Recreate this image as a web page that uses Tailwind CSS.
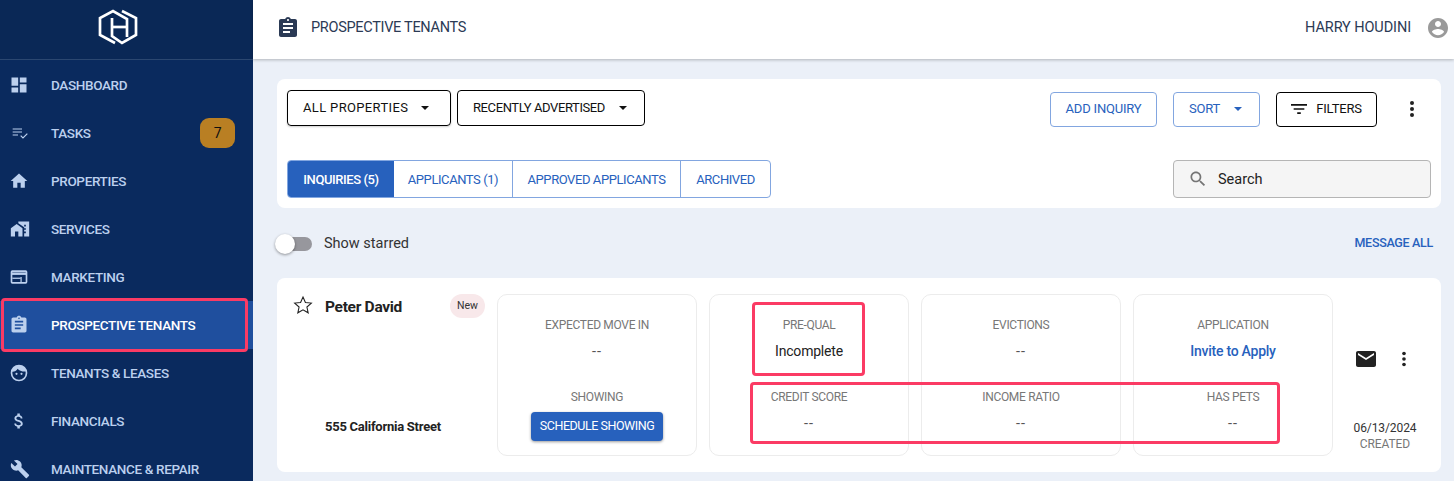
<!DOCTYPE html>
<html lang="en">

<head>
    <meta charset="UTF-8">
    <meta name="viewport" content="width=device-width, initial-scale=1.0">
    <title>Prospective Tenants</title>
    <script src="https://cdn.jsdelivr.net/npm/@tailwindcss/browser@4"></script>
</head>

<body class="font-['Roboto',sans-serif] overflow-hidden">
    <div class="relative flex h-[481px] w-[1454px] overflow-hidden bg-[#ebf0f8]">

        <!-- sidebar -->
        <aside class="w-[253px] shrink-0 bg-[#0a2a5e] text-[13.5px] font-medium tracking-[-0.35px] text-[#bcd0ee]">
            <div class="flex h-[60px] items-center justify-center border-b border-[#2b4770] bg-[#0a2856]">
                <svg class="ml-[-17px] mt-[-6px] h-[36px] w-[40px]" viewBox="98 9 40 36" fill="none" stroke="white" stroke-width="2.700">
                    <path d="M115 43 100 35V18L113 11 127 19V37" />
                    <path d="M122 11 136 18V35L122 43 112 36V18" />
                    <path d="M112 27H127" />
                </svg>
            </div>
            <nav class="pt-px">
                <a class="flex h-[48px] items-center pl-[51px] relative">
                    <svg class="absolute left-[9px] h-[20px] w-[20px]" viewBox="0 0 24 24" fill="#bcd0ee"><path d="M3 13h8V3H3v10zm0 8h8v-6H3v6zm10 0h8V11h-8v10zm0-18v6h8V3h-8z" /></svg>
                    DASHBOARD
                </a>
                <a class="flex h-[48px] items-center justify-between pl-[51px] pr-[18px] relative">
                    <svg class="absolute left-[12px] h-[16px] w-[16px]" viewBox="0 0 24 24" fill="none" stroke="#bcd0ee" stroke-width="1.800"><path d="M1 6h14M1 10.500h14M1 15h8M13 16l3.500 3.500L23 13" /></svg>
                    TASKS
                    <span class="flex h-[30px] w-[35px] items-center justify-center rounded-[9px] bg-[#b97f23] text-[14px] font-normal text-[#111]">7</span>
                </a>
                <a class="flex h-[48px] items-center pl-[51px] relative">
                    <svg class="absolute left-[9px] h-[20px] w-[20px]" viewBox="0 0 24 24" fill="#bcd0ee"><path d="M10 20v-6h4v6h5v-8h3L12 3 2 12h3v8z" /></svg>
                    PROPERTIES
                </a>
                <a class="flex h-[48px] items-center pl-[51px] relative">
                    <svg class="absolute left-[10px] h-[20px] w-[20px]" viewBox="0 0 24 24" fill="#bcd0ee"><path d="M1 11v10h5v-6h4v6h5V11L8 6z" /><path d="M10 3v1.970l7 5V11h2v2h-2v2h2v2h-2v4h6V3H10zm9 6h-2V7h2v2z" /></svg>
                    SERVICES
                </a>
                <a class="flex h-[48px] items-center pl-[51px] relative">
                    <svg class="absolute left-[9px] h-[20px] w-[20px]" viewBox="0 0 24 24" fill="none" stroke="#bcd0ee"><rect x="3" y="5" width="18" height="14" rx="1" stroke-width="2" /><path d="M3 8h18" stroke-width="3" /><path d="M14.500 12v6" stroke-width="1.500" /><path d="M4 13.500h10" stroke-width="1.500" /></svg>
                    MARKETING
                </a>
                <a class="flex h-[48px] items-center bg-[#1f4f9e] pl-[51px] text-white relative">
                    <svg class="absolute left-[9px] h-[20px] w-[20px]" viewBox="0 0 24 24" fill="#bcd0ee"><path d="M19 3h-4.180C14.400 1.840 13.300 1 12 1c-1.300 0-2.400.84-2.820 2H5c-1.100 0-2 .9-2 2v14c0 1.100.9 2 2 2h14c1.100 0 2-.9 2-2V5c0-1.100-.9-2-2-2zm-7 0c.55 0 1 .45 1 1s-.45 1-1 1-1-.45-1-1 .45-1 1-1zm2 14H7v-2h7v2zm3-4H7v-2h10v2zm0-4H7V7h10v2z" /></svg>
                    PROSPECTIVE TENANTS
                </a>
                <a class="flex h-[48px] items-center pl-[51px] relative">
                    <svg class="absolute left-[9px] h-[20px] w-[20px]" viewBox="0 0 24 24" fill="#bcd0ee"><path d="M12 2a10 10 0 1 0 0 20 10 10 0 0 0 0-20zm0 18a8 8 0 0 1-8-8c0-.6.1-1.100.2-1.600C7 10.300 9 9 10.500 6.800 12 9 15.500 10.500 19.800 10.300c.1.500.2 1.100.2 1.700a8 8 0 0 1-8 8z" /><circle cx="9" cy="13" r="1.300" /><circle cx="15" cy="13" r="1.300" /></svg>
                    TENANTS &amp; LEASES
                </a>
                <a class="flex h-[48px] items-center pl-[51px] relative">
                    <svg class="absolute left-[9px] h-[20px] w-[20px]" viewBox="0 0 24 24" fill="#bcd0ee"><path d="M11.800 10.900c-2.270-.59-3-1.200-3-2.150 0-1.090 1.010-1.850 2.700-1.850 1.780 0 2.440.85 2.500 2.100h2.210c-.07-1.720-1.120-3.300-3.210-3.810V3h-3v2.160c-1.940.42-3.500 1.680-3.500 3.610 0 2.310 1.910 3.460 4.700 4.130 2.500.6 3 1.480 3 2.410 0 .69-.49 1.790-2.700 1.790-2.060 0-2.870-.92-2.980-2.100h-2.200c.12 2.190 1.760 3.420 3.680 3.830V21h3v-2.150c1.950-.37 3.500-1.500 3.500-3.550 0-2.840-2.430-3.810-4.700-4.400z" /></svg>
                    FINANCIALS
                </a>
                <a class="flex h-[48px] items-center pl-[51px] relative">
                    <svg class="absolute left-[10px] h-[20px] w-[20px]" viewBox="0 0 24 24" fill="#bcd0ee"><path d="M22.700 19l-9.100-9.100c.9-2.300.4-5-1.500-6.900-2-2-5-2.400-7.400-1.300L9 6 6 9 1.600 4.700C.4 7.100.9 10.100 2.900 12.100c1.900 1.900 4.600 2.400 6.900 1.500l9.100 9.100c.4.4 1 .4 1.400 0l2.300-2.300c.5-.4.5-1.100.1-1.400z" /></svg>
                    MAINTENANCE &amp; REPAIR
                </a>
            </nav>
        </aside>

        <div class="min-w-0 flex-1">
            <!-- top bar -->
            <header class="flex h-[59px] items-center justify-between bg-white pb-[3px] pl-[23px] pr-[4px] text-[#2b3a55] shadow-[0_1px_3px_rgba(0,0,0,0.25)]">
                <div class="flex items-center gap-[11px] text-[14.500px] tracking-[-0.3px]">
                    <svg class="h-[24px] w-[24px]" viewBox="0 0 24 24" fill="#2b3a55"><path d="M19 3h-4.180C14.400 1.840 13.300 1 12 1c-1.300 0-2.400.84-2.820 2H5c-1.100 0-2 .9-2 2v14c0 1.100.9 2 2 2h14c1.100 0 2-.9 2-2V5c0-1.100-.9-2-2-2zm-7 0c.55 0 1 .45 1 1s-.45 1-1 1-1-.45-1-1 .45-1 1-1zm2 14H7v-2h7v2zm3-4H7v-2h10v2zm0-4H7V7h10v2z" /></svg>
                    PROSPECTIVE TENANTS
                </div>
                <div class="flex items-center gap-[15px] text-[14.500px] tracking-[-0.1px]">
                    HARRY HOUDINI
                    <svg class="h-[24px] w-[24px]" viewBox="0 0 24 24" fill="#9a9a9a"><path d="M12 2C6.480 2 2 6.480 2 12s4.480 10 10 10 10-4.480 10-10S17.520 2 12 2zm0 3c1.660 0 3 1.340 3 3s-1.340 3-3 3-3-1.340-3-3 1.340-3 3-3zm0 14.200c-2.500 0-4.710-1.280-6-3.220.03-1.990 4-3.080 6-3.080 1.990 0 5.970 1.090 6 3.080-1.290 1.940-3.500 3.220-6 3.220z" /></svg>
                </div>
            </header>

            <main class="pl-[24px] pr-[13px] pt-[20px]">
                <!-- filters panel -->
                <section class="h-[129px] rounded-[8px] bg-white pl-[10px] pr-[10px] pt-[11px]">
                    <div class="flex h-[36px] items-center justify-between text-[13px] tracking-[-0.2px]">
                        <div class="flex gap-[6px] text-[#111]">
                            <button class="flex h-[36px] w-[164px] items-center justify-between rounded-[4px] border border-black pl-[15px] pr-[21px] tracking-[0.35px] shadow-[0_1px_2px_rgba(0,0,0,0.2)]">
                                ALL PROPERTIES
                                <span class="h-0 w-0 border-x-[4px] border-t-[4px] border-x-transparent border-t-[#111]"></span>
                            </button>
                            <button class="flex h-[36px] w-[188px] items-center justify-between rounded-[4px] border border-black pl-[15px] pr-[17px] tracking-[-0.4px]">
                                RECENTLY ADVERTISED
                                <span class="h-0 w-0 border-x-[4px] border-t-[4px] border-x-transparent border-t-[#111]"></span>
                            </button>
                        </div>
                        <div class="mt-[2px] flex items-center">
                            <button class="h-[35px] w-[107px] rounded-[4px] border border-[#82a6e0] text-[#2761bd]">ADD INQUIRY</button>
                            <button class="ml-[16px] flex h-[35px] w-[87px] items-center justify-between rounded-[4px] border border-[#82a6e0] pl-[15px] pr-[17px] text-[#2761bd]">
                                SORT
                                <span class="h-0 w-0 border-x-[4px] border-t-[4px] border-x-transparent border-t-[#2761bd]"></span>
                            </button>
                            <button class="ml-[16px] flex h-[35px] w-[101px] items-center justify-center gap-[9px] rounded-[4px] border border-black text-[#111]">
                                <svg class="h-[10px] w-[16px]" viewBox="3 6 18 12" preserveAspectRatio="none" fill="#111"><path d="M10 18h4v-2h-4v2zM3 6v2h18V6H3zm3 7h12v-2H6v2z" /></svg>
                                FILTERS
                            </button>
                            <svg class="ml-[23px] mr-[7px] h-[24px] w-[24px]" viewBox="0 0 24 24" fill="#222"><circle cx="12" cy="6" r="2" /><circle cx="12" cy="12" r="2" /><circle cx="12" cy="18" r="2" /></svg>
                        </div>
                    </div>
                    <div class="mt-[34px] flex items-center justify-between">
                        <div class="flex h-[38px] overflow-hidden rounded-[4px] border border-[#82a6e0] pt-px text-[13px] tracking-[-0.42px] text-[#2761bd]">
                            <div class="mt-[-1px] flex w-[106px] items-center justify-center bg-[#2761bd] pt-px font-medium text-white">INQUIRIES (5)</div>
                            <div class="flex w-[119px] items-center justify-center border-r border-[#82a6e0] mt-[-1px] pt-px">APPLICANTS (1)</div>
                            <div class="flex w-[168px] items-center justify-center border-r border-[#82a6e0] mt-[-1px] pt-px">APPROVED APPLICANTS</div>
                            <div class="flex w-[89px] items-center justify-center">ARCHIVED</div>
                        </div>
                        <div class="flex h-[38px] w-[258px] items-center gap-[10px] rounded-[4px] border border-[#b5b5b5] bg-[#f5f5f5] pl-[14px] text-[14.500px] text-[#222]">
                            <svg class="h-[20px] w-[20px]" viewBox="0 0 24 24" fill="#757575"><path d="M15.500 14h-.79l-.28-.27C15.410 12.590 16 11.110 16 9.500 16 5.910 13.090 3 9.500 3S3 5.910 3 9.500 5.910 16 9.500 16c1.610 0 3.090-.59 4.230-1.570l.27.28v.79l5 4.990L20.490 19l-4.990-5zm-6 0C7.010 14 5 11.990 5 9.500S7.010 5 9.500 5 14 7.010 14 9.500 11.990 14 9.500 14z" /></svg>
                            <span class="pt-[2px]">Search</span>
                        </div>
                    </div>
                </section>

                <!-- starred toggle -->
                <div class="flex h-[70px] items-center justify-between pt-[1px]">
                    <div class="flex items-center gap-[12px] text-[14.500px] text-[#333]">
                        <div class="relative ml-[-2px] h-[20px] w-[37px]">
                            <div class="absolute left-[3px] top-[3px] h-[14px] w-[34px] rounded-full bg-[#97979d]"></div>
                            <div class="absolute left-0 top-0 h-[20px] w-[20px] rounded-full bg-white shadow-[0_1px_3px_rgba(0,0,0,0.4)]"></div>
                        </div>
                        Show starred
                    </div>
                    <a class="pr-[8px] text-[12.500px] font-medium tracking-[-0.3px] text-[#2761bd]">MESSAGE ALL</a>
                </div>

                <!-- tenant card -->
                <article class="flex h-[194px] rounded-[8px] bg-white pl-[16px] pt-[16px]">
                    <div class="flex h-[162px] w-[192px] shrink-0 flex-col justify-between">
                        <div class="flex items-start">
                            <svg class="mt-[1px] h-[20px] w-[20px]" viewBox="0 0 24 24" fill="none" stroke="#222" stroke-width="1.300"><path d="M12 2.500l2.900 6.500 7.100.7-5.300 4.700 1.500 7-6.200-3.600-6.200 3.600 1.500-7L2 9.700 9.100 9z" /></svg>
                            <span class="ml-[12px] mt-[2px] text-[15.500px] font-bold tracking-[-0.3px] text-[#222]">Peter David</span>
                            <span class="ml-auto flex h-[24px] w-[35px] items-center justify-center rounded-full bg-[#f8e8ea] text-[10.500px] text-[#333]">New</span>
                        </div>
                        <div class="pb-[20px] pl-[32px] text-[13px] font-bold tracking-[-0.25px] text-[#222]">555 California Street</div>
                    </div>

                    <div class="ml-[12px] grid h-[162px] w-[200px] shrink-0 grid-rows-2 rounded-[10px] border border-[#ececec] text-center text-[12px] tracking-[-0.32px] text-[#777]">
                        <div class="pt-[21px]">EXPECTED MOVE IN<div class="mt-[7px] text-[14.500px] tracking-[1px] text-[#555]">--</div></div>
                        <div class="pt-[13px]">SHOWING
                            <button class="mx-auto mt-[6px] flex h-[29px] w-[132px] items-center justify-center rounded-[4px] bg-[#2761bd] text-[12.500px] tracking-[-0.45px] text-white shadow-[0_1px_3px_rgba(0,0,0,0.4)]">SCHEDULE SHOWING</button>
                        </div>
                    </div>
                    <div class="ml-[12px] grid h-[162px] w-[200px] shrink-0 grid-rows-2 rounded-[10px] border border-[#ececec] text-center text-[12px] tracking-[-0.32px] text-[#777]">
                        <div class="pt-[21px]">PRE-QUAL<div class="mt-[7px] text-[14px] tracking-[-0.2px] text-[#222]">Incomplete</div></div>
                        <div class="pt-[13px]">CREDIT SCORE<div class="mt-[7px] text-[14.500px] tracking-[1px] text-[#555]">--</div></div>
                    </div>
                    <div class="ml-[12px] grid h-[162px] w-[200px] shrink-0 grid-rows-2 rounded-[10px] border border-[#ececec] text-center text-[12px] tracking-[-0.32px] text-[#777]">
                        <div class="pt-[21px]">EVICTIONS<div class="mt-[7px] text-[14.500px] tracking-[1px] text-[#555]">--</div></div>
                        <div class="pt-[13px]">INCOME RATIO<div class="mt-[7px] text-[14.500px] tracking-[1px] text-[#555]">--</div></div>
                    </div>
                    <div class="ml-[12px] grid h-[162px] w-[200px] shrink-0 grid-rows-2 rounded-[10px] border border-[#ececec] text-center text-[12px] tracking-[-0.32px] text-[#777]">
                        <div class="pt-[21px]">APPLICATION<div class="mt-[7px] text-[14px] font-medium tracking-[-0.25px] text-[#2761bd]">Invite to Apply</div></div>
                        <div class="pt-[13px]">HAS PETS<div class="mt-[7px] text-[14.500px] tracking-[1px] text-[#555]">--</div></div>
                    </div>

                    <div class="flex h-[162px] flex-1 flex-col items-center justify-between text-center text-[12px] tracking-[-0.1px]">
                        <div class="mt-[53px] flex items-center gap-[15px] pr-[5px]">
                            <svg class="h-[24px] w-[24px]" viewBox="0 0 24 24" fill="#222"><path d="M20 4H4c-1.100 0-2 .9-2 2v12c0 1.100.9 2 2 2h16c1.100 0 2-.9 2-2V6c0-1.100-.9-2-2-2zm0 4l-8 5-8-5V6l8 5 8-5v2z" /></svg>
                            <svg class="h-[22px] w-[22px]" viewBox="0 0 24 24" fill="#222"><circle cx="12" cy="6" r="2" /><circle cx="12" cy="12" r="2" /><circle cx="12" cy="18" r="2" /></svg>
                        </div>
                        <div class="mb-[4px] ml-[-4px] leading-[16px] text-[#333]">06/13/2024<div class="text-[#777]">CREATED</div></div>
                    </div>
                </article>
            </main>
        </div>

        <!-- red annotation boxes laid over the screenshot -->
        <div class="pointer-events-none absolute left-[1px] top-[298px] h-[54px] w-[247px] rounded-[4px] border-[3px] border-[#fb3b64]"></div>
        <div class="pointer-events-none absolute left-[752px] top-[302px] h-[74px] w-[113px] rounded-[4px] border-[3px] border-[#fb3b64]"></div>
        <div class="pointer-events-none absolute left-[750px] top-[382px] h-[62px] w-[530px] rounded-[4px] border-[3px] border-[#fb3b64]"></div>
    </div>
</body>

</html>
